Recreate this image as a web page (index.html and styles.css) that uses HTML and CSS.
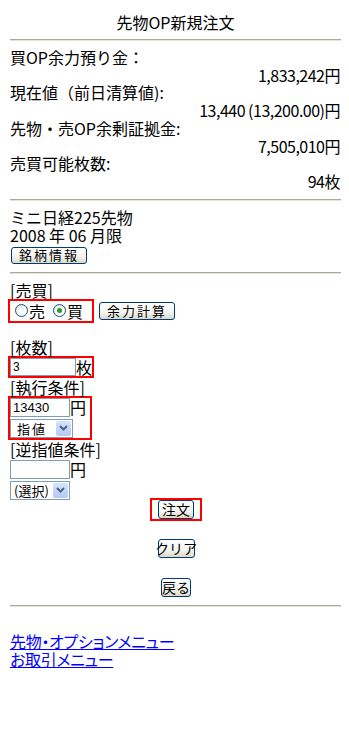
FILE: index.html
```html
<!DOCTYPE html>
<html lang="ja">
<head>
  <meta charset="UTF-8">
  <meta name="viewport" content="width=device-width, initial-scale=1.0">
  <title>先物OP新規注文</title>
  <link rel="stylesheet" href="styles.css">
</head>
<body>
  <div class="page">
    <!-- Heading -->
    <h1 class="title">先物OP新規注文</h1>
    <hr class="rule">

    <!-- Balances -->
    <div class="info">
      <div class="label">買OP余力預り金：</div>
      <div class="value">1,833,242円</div>
      <div class="label">現在値（前日清算値):</div>
      <div class="value">13,440 (13,200.00)円</div>
      <div class="label">先物・売OP余剰証拠金:</div>
      <div class="value">7,505,010円</div>
      <div class="label">売買可能枚数:</div>
      <div class="value">94枚</div>
    </div>
    <hr class="rule">

    <!-- Contract -->
    <div class="contract">
      <div class="line">ミニ日経225先物</div>
      <div class="line">2008 年 06 月限</div>
      <button class="btn btn-info" type="button">銘柄情報</button>
    </div>
    <hr class="rule rule-mid">

    <!-- Order form -->
    <form class="order">
      <div class="line">[売買]</div>
      <div class="side-row">
        <div class="mark mark-side">
          <label class="radio"><input type="radio" name="side">売</label>
          <label class="radio"><input type="radio" name="side" checked>買</label>
        </div>
        <button class="btn btn-calc" type="button">余力計算</button>
      </div>

      <div class="line qty-label">[枚数]</div>
      <div class="mark mark-field">
        <input class="field field-qty" type="text" value="3"><span class="unit">枚</span>
      </div>

      <div class="line">[執行条件]</div>
      <div class="mark mark-field mark-stack">
        <div class="field-row">
          <input class="field field-price" type="text" value="13430"><span class="unit">円</span>
        </div>
        <div class="select select-limit">
          <span class="select-text">指値</span>
          <span class="arrow"><svg width="9" height="6" viewBox="0 0 9 6"><path d="M1 1l3.5 3.5L8 1" fill="none" stroke="#4d6185" stroke-width="2"/></svg></span>
        </div>
      </div>

      <div class="line">[逆指値条件]</div>
      <div class="field-row stop-row">
        <input class="field field-price" type="text" value=""><span class="unit">円</span>
      </div>
      <div class="select select-stop">
        <span class="select-text">(選択)</span>
        <span class="arrow"><svg width="9" height="6" viewBox="0 0 9 6"><path d="M1 1l3.5 3.5L8 1" fill="none" stroke="#4d6185" stroke-width="2"/></svg></span>
      </div>

      <div class="actions">
        <div class="mark mark-submit">
          <button class="btn btn-small" type="button">注文</button>
        </div>
        <button class="btn btn-small btn-clear" type="reset">クリア</button>
        <button class="btn btn-small btn-back" type="button">戻る</button>
      </div>
    </form>
    <hr class="rule rule-end">

    <!-- Menu links -->
    <div class="links">
      <a href="#">先物・オプションメニュー</a><br>
      <a href="#">お取引メニュー</a>
    </div>
  </div>
</body>
</html>
```

FILE: styles.css
```css
* {
  box-sizing: border-box;
  margin: 0;
  padding: 0;
}

body {
  background: #fff;
  color: #000;
  font-family: "Noto Sans CJK JP", "DejaVu Sans", sans-serif;
  font-size: 16px;
}

.page {
  padding: 0 8px 0 10px;
}

.title {
  font-size: 16px;
  font-weight: normal;
  line-height: 18px;
  text-align: center;
  margin-top: 13px;
}

.rule {
  border: none;
  border-top: 1px solid #aca899;
  border-bottom: 1px solid #e6e3d8;
  height: 2px;
  margin: 8px 0;
}

.info {
  line-height: 17.7px;
}

.value {
  text-align: right;
  padding-right: 1px;
  letter-spacing: -0.5px;
}

.contract {
  margin-top: -1px;
}

.line {
  line-height: 18px;
}

/* XP style push buttons */
.btn {
  font-family: "Noto Sans CJK JP", sans-serif;
  font-size: 13px;
  line-height: 1;
  color: #000;
  background: linear-gradient(#ffffff, #f4f3ee 60%, #dcd8c8);
  border: 1px solid #003c74;
  border-radius: 3px;
  padding: 0 0 1px;
  white-space: nowrap;
  display: flex;
  justify-content: center;
  align-items: center;
}

.btn-info {
  width: 76px;
  height: 17px;
  margin: 3px 0 0 1px;
  letter-spacing: 2px;
}

.rule-mid {
  margin-top: 8px;
  margin-bottom: 7px;
}

.side-row {
  display: flex;
  align-items: center;
  gap: 5px;
}

.mark {
  border: 2px solid #ff0000;
  margin-left: -2px;
}

.mark-side {
  display: flex;
  align-items: center;
  height: 24px;
  width: 86px;
  padding-left: 5px;
  gap: 8px;
}

.radio {
  display: flex;
  align-items: center;
  line-height: 18px;
}

.radio input {
  appearance: none;
  width: 13px;
  height: 13px;
  border: 1px solid #1c5180;
  border-radius: 50%;
  background: radial-gradient(circle at 60% 65%, #ffffff 30%, #dcdcd7);
  margin-right: 1px;
  display: grid;
  place-content: center;
}

.radio input:checked::before {
  content: "";
  width: 5px;
  height: 5px;
  border-radius: 50%;
  background: #21a121;
}

.btn-calc {
  width: 76px;
  height: 18px;
  letter-spacing: 2px;
}

.qty-label {
  margin-top: 15px;
}

.mark-field {
  display: flex;
  align-items: center;
  width: max-content;
}

.mark-stack {
  flex-direction: column;
  align-items: flex-start;
  gap: 2px;
  padding-right: 4px;
}

.field {
  font-family: "Liberation Sans", sans-serif;
  font-size: 13px;
  height: 19px;
  border: 1px solid #7f9db9;
  padding: 0 2px;
  color: #000;
  background: #fff;
  display: block;
}

.field-qty {
  width: 66px;
  height: 18px;
  font-size: 12px;
}

.field-price {
  width: 60px;
}

.field-row {
  display: flex;
  align-items: center;
  line-height: 18px;
}

.unit {
  line-height: 18px;
}

.stop-row {
  margin-top: 2px;
}

.select {
  position: relative;
  height: 19px;
  border: 1px solid #7f9db9;
  background: #fff;
  display: flex;
  align-items: center;
}

.select-text {
  font-size: 13px;
  line-height: 17px;
  padding-left: 3px;
}

.select .arrow {
  position: absolute;
  top: 1px;
  right: 1px;
  width: 15px;
  height: 15px;
  border-radius: 2px;
  background: linear-gradient(#d6e2fd, #b4c8f6);
  display: flex;
  justify-content: center;
  align-items: center;
}

.select-limit {
  width: 63px;
}

.select-limit .select-text {
  letter-spacing: 2px;
  padding-left: 6px;
}

.select-stop {
  width: 60px;
  margin-top: 2px;
}

.actions {
  display: flex;
  flex-direction: column;
  align-items: center;
  padding-left: 1px;
  margin-top: -2px;
}

.mark-submit {
  margin-left: 0;
  width: 52px;
  height: 23px;
  display: flex;
  justify-content: center;
  align-items: center;
}

.btn-small {
  height: 19px;
  width: 36px;
  font-size: 14px;
}

.btn-clear {
  width: 37px;
  margin-top: 18px;
}

.btn-back {
  width: 30px;
  margin-top: 20px;
}

.rule-end {
  margin-top: 8px;
}

.links {
  margin-top: 25px;
  line-height: 18px;
  font-feature-settings: "palt";
  letter-spacing: -0.3px;
}

.links a {
  color: #0000ff;
}
```
